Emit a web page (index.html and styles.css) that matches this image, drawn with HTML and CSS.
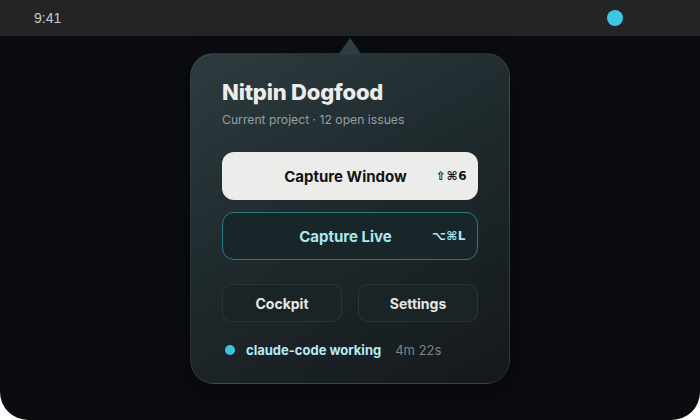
FILE: index.html
```html
<!DOCTYPE html>
<html lang="en">
<head>
  <meta charset="UTF-8">
  <title>Nitpin – Menu</title>
  <link rel="stylesheet" href="styles.css">
</head>
<body>

  <div class="pantalla">
    <div class="barra">
      <span class="hora">9:41</span>
      <span class="punto-estado"></span>
    </div>

    <div class="escena">
      <div class="popover">
        <div class="flecha"></div>

        <h1>Nitpin Dogfood</h1>
        <p class="sub">Current project · 12 open issues</p>

        <div class="acciones">
          <button class="btn btn-claro">
            <span class="etiqueta">Capture Window</span>
            <span class="atajo">⇧⌘6</span>
          </button>
          <button class="btn btn-vivo">
            <span class="etiqueta">Capture Live</span>
            <span class="atajo">⌥⌘L</span>
          </button>
        </div>

        <div class="fila">
          <button class="btn-sec">Cockpit</button>
          <button class="btn-sec">Settings</button>
        </div>

        <div class="estado">
          <span class="punto"></span>
          <span class="agente">claude-code working</span>
          <span class="tiempo">4m 22s</span>
        </div>
      </div>
    </div>
  </div>

</body>
</html>
```

FILE: styles.css
```css
* {
  margin: 0;
  padding: 0;
  box-sizing: border-box;
}

html, body {
  width: 700px;
  height: 420px;
  background: #ffffff;
  font-family: 'Inter', 'Liberation Sans', sans-serif;
  overflow: hidden;
}

.pantalla {
  width: 700px;
  height: 420px;
  display: flex;
  flex-direction: column;
  background: #0a0c10;
  border-radius: 0 0 28px 28px;
  overflow: hidden;
}

.barra {
  height: 36px;
  flex-shrink: 0;
  background: #232426;
  display: flex;
  align-items: center;
  justify-content: space-between;
  padding: 0 77px 0 34px;
}

.hora {
  font-family: 'Liberation Sans', sans-serif;
  font-size: 14px;
  color: #c9cacb;
}

.punto-estado {
  width: 16px;
  height: 16px;
  border-radius: 50%;
  background: #3cc8e2;
}

.escena {
  flex: 1;
  display: flex;
  justify-content: center;
  padding-top: 17px;
}

.popover {
  position: relative;
  width: 320px;
  height: 331px;
  padding: 24px 31px 0;
  border-radius: 24px;
  border: 1px solid rgba(255, 255, 255, 0.09);
  background: linear-gradient(150deg, #2d3c40 0%, #1f2a2d 45%, #14181b 100%);
  box-shadow: 0 10px 30px rgba(0, 0, 0, 0.4);
}

.flecha {
  position: absolute;
  top: -16px;
  left: 147px;
  width: 24px;
  height: 17px;
  background: #2e3e42;
  clip-path: polygon(50% 0, 100% 100%, 0 100%);
}

h1 {
  font-size: 22px;
  font-weight: 800;
  line-height: 28px;
  color: #ececea;
  letter-spacing: -0.2px;
}

.sub {
  margin-top: 5px;
  font-size: 12.2px;
  line-height: 18px;
  color: #979fa1;
}

.acciones {
  margin-top: 23px;
  display: flex;
  flex-direction: column;
  gap: 12px;
}

.btn {
  height: 48px;
  width: 100%;
  border-radius: 12px;
  display: grid;
  grid-template-columns: 1fr auto 1fr;
  align-items: center;
  padding: 0 11px 0 2px;
  font-family: inherit;
  cursor: pointer;
}

.btn .etiqueta {
  grid-column: 2;
  font-size: 15px;
  font-weight: 700;
}

.btn .atajo {
  grid-column: 3;
  justify-self: end;
  font-family: 'DejaVu Sans', sans-serif;
  font-size: 12px;
  font-weight: 700;
  letter-spacing: 0.5px;
}

.btn-claro {
  background: #ececea;
  border: none;
  color: #121416;
}

.btn-vivo {
  background: #182629;
  border: 1px solid #2b7b87;
  color: #a8e8f3;
}

.fila {
  margin-top: 24px;
  display: flex;
  gap: 16px;
}

.btn-sec {
  flex: 1;
  height: 38px;
  border-radius: 10px;
  background: #1a2326;
  border: 1px solid rgba(255, 255, 255, 0.08);
  color: #e6e7e5;
  font-family: inherit;
  font-size: 14px;
  font-weight: 700;
  cursor: pointer;
}

.estado {
  margin-top: 19px;
  display: flex;
  align-items: center;
  height: 18px;
  padding-left: 3px;
  font-size: 13px;
}

.punto {
  width: 10px;
  height: 10px;
  border-radius: 50%;
  background: #3cc5e0;
  margin-right: 11px;
}

.agente {
  font-weight: 700;
  color: #b6ebf5;
}

.tiempo {
  margin-left: 14px;
  color: #7c8487;
}
```
